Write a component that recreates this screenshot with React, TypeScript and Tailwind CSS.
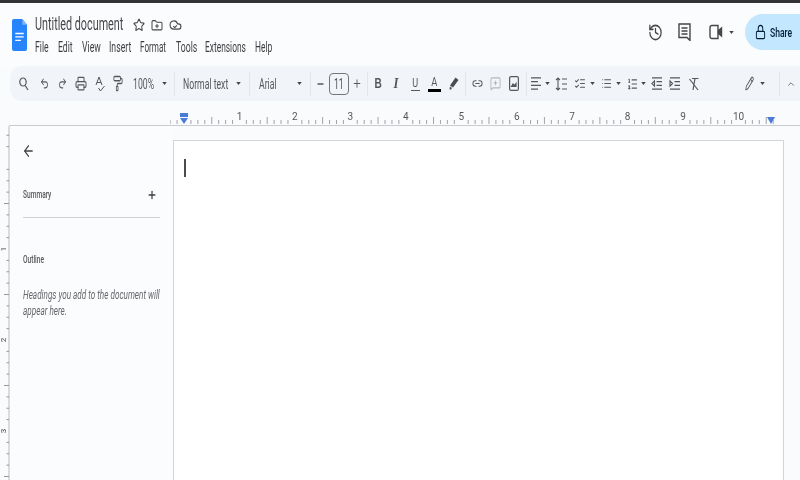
import React from "react";
import {
  Undo2, Redo2, Printer, PaintRoller, Star, FolderPlus, History, Lock, Link2, MessageSquarePlus,
  ListChecks, List, ListOrdered, Pencil, ChevronUp, ArrowLeft, Plus, Minus,
} from "lucide-react";

const np = { preserveAspectRatio: "none" as const };

function Cell({ className = "", children }: { className?: string; children?: React.ReactNode }) {
  return <div className={"flex items-center justify-center shrink-0 " + className}>{children}</div>;
}
function Caret({ className = "" }: { className?: string }) {
  return (
    <Cell className={"w-[8px] " + className}>
      <svg width="5" height="3" viewBox="0 0 6 4"><path d="M0 0h6L3 4z" fill="#444746" /></svg>
    </Cell>
  );
}
function Sep({ className = "" }: { className?: string }) {
  return <div className={"w-px h-[24px] bg-[#e2e6eb] shrink-0 " + className} />;
}
function Lines({ d }: { d: string }) {
  return (
    <svg className="w-[12px] h-[15px]" viewBox="0 0 24 24" preserveAspectRatio="none" fill="none" stroke="#55585a" strokeWidth="2.2">
      <path d={d} />
    </svg>
  );
}

function HRuler() {
  const x0 = 14;
  const step = 55.45 / 8;
  const ticks = [];
  for (let k = -2; k < 86; k++) {
    const x = x0 + k * step;
    const h = k % 8 === 0 ? 0 : k % 4 === 0 ? 7 : 4;
    if (h) ticks.push(<path key={k} d={`M${x} 23v-${h}`} stroke="#8a8d90" strokeWidth="0.8" />);
  }
  return (
    <svg width="630" height="24" viewBox="0 0 630 24" className="block shrink-0">
      {ticks}
      {[1, 2, 3, 4, 5, 6, 7, 8, 9, 10].map((n) => (
        <text key={n} x={x0 + n * 55.45} y="19" textAnchor="middle" fontSize="10" fontFamily="Roboto, sans-serif" fill="#55585a">{n}</text>
      ))}
      <rect x="10" y="12" width="8" height="4" fill="#4a7bd8" />
      <path d="M10 17h8l-4 6z" fill="#4a7bd8" />
      <path d="M597 16h8l-4 7z" fill="#4a7bd8" />
    </svg>
  );
}

function VRuler() {
  const y0 = 32;
  const step = 91 / 8;
  const ticks = [];
  for (let k = -2; k < 30; k++) {
    const y = y0 + k * step;
    const w = k % 8 === 0 ? 0 : k % 4 === 0 ? 5 : 2.5;
    if (w) ticks.push(<path key={k} d={`M9 ${y}h-${w}`} stroke="#8a8d90" strokeWidth="0.9" />);
  }
  return (
    <svg width="10" height="355" viewBox="0 0 10 355" className="block shrink-0">
      <path d="M9 0v355" stroke="#d0d2d5" strokeWidth="1.5" />
      {ticks}
      {[1, 2, 3].map((n) => (
        <text key={n} x="0" y="0" transform={`translate(1 ${y0 + n * 91}) rotate(-90) scale(1 0.9)`} textAnchor="middle" dominantBaseline="hanging" fontSize="8" fontFamily="Roboto, sans-serif" fill="#444746">{n}</text>
      ))}
    </svg>
  );
}

export default function App() {
  return (
    <div className="w-[800px] h-[480px] overflow-hidden flex flex-col bg-[#f9fbfd] text-[#1f1f1f] font-['Roboto',sans-serif] blur-[0.45px]">
      <div className="h-[3px] bg-[#333436] shrink-0" />

      {/* header */}
      <div className="h-[63px] shrink-0 flex bg-[#fbfcfe]">
        <div className="ml-[12px] mt-[16px] w-[15px] h-[32px] shrink-0">
          <svg width="15" height="32" viewBox="0 0 16 33" preserveAspectRatio="none" className="block">
            <path d="M2 0h9l5 6v25a2 2 0 0 1-2 2H2a2 2 0 0 1-2-2V2a2 2 0 0 1 2-2z" fill="#2684fc" />
            <path d="M11 0l5 6h-5z" fill="#7fb4fb" />
            <path d="M3.500 15h9M3.500 18.500h9M3.500 22h6" stroke="#fff" strokeWidth="1.4" />
          </svg>
        </div>
        <div className="ml-[8px] w-[240px] shrink-0 flex flex-col">
          <div className="mt-[11px] h-[22px] flex items-center">
            <span className="w-[95px] shrink-0 block">
              <span className="inline-block origin-left scale-x-[0.6] whitespace-nowrap text-[18px] leading-[22px] text-[#44474a]">Untitled document</span>
            </span>
            <Cell className="ml-[1px] w-[16px]"><Star className="w-[12px] h-[14px] text-[#444746]" {...np} /></Cell>
            <Cell className="ml-[2px] w-[16px]"><FolderPlus className="w-[12px] h-[13px] text-[#444746]" {...np} /></Cell>
            <Cell className="ml-[2px] w-[16px]">
              <svg className="w-[13px] h-[14px]" viewBox="0 0 24 24" preserveAspectRatio="none" fill="none" stroke="#444746" strokeWidth="2">
                <path d="M17.500 19H9a7 7 0 1 1 6.710-9h1.790a4.500 4.500 0 1 1 0 9Z" />
                <path d="m8 14 2.500 2.500 4-4" />
              </svg>
            </Cell>
          </div>
          <div className="mt-[3px] h-[16px] flex items-center text-[14px] leading-[16px] text-[#3c3f42]">
            <span className="block w-[23px] shrink-0"><span className="inline-block origin-left scale-x-[0.62] whitespace-nowrap">File</span></span>
            <span className="block w-[24px] shrink-0"><span className="inline-block origin-left scale-x-[0.62] whitespace-nowrap">Edit</span></span>
            <span className="block w-[27px] shrink-0"><span className="inline-block origin-left scale-x-[0.62] whitespace-nowrap">View</span></span>
            <span className="block w-[31px] shrink-0"><span className="inline-block origin-left scale-x-[0.62] whitespace-nowrap">Insert</span></span>
            <span className="block w-[36px] shrink-0"><span className="inline-block origin-left scale-x-[0.58] whitespace-nowrap">Format</span></span>
            <span className="block w-[29px] shrink-0"><span className="inline-block origin-left scale-x-[0.62] whitespace-nowrap">Tools</span></span>
            <span className="block w-[50px] shrink-0"><span className="inline-block origin-left scale-x-[0.6] whitespace-nowrap">Extensions</span></span>
            <span className="block w-[20px] shrink-0"><span className="inline-block origin-left scale-x-[0.6] whitespace-nowrap">Help</span></span>
          </div>
        </div>
        <div className="flex-1 flex items-start justify-end pt-[11px]">
          <Cell className="w-[18px] h-[36px]"><History className="w-[15px] h-[19px] text-[#444746]" {...np} /></Cell>
          <Cell className="ml-[11px] w-[18px] h-[36px]">
            <svg className="w-[13px] h-[18px]" viewBox="0 0 13 18" fill="none" stroke="#444746" strokeWidth="1.4">
              <path d="M1 1h11v13.500l0 3-3-3H1z" />
              <path d="M3.500 5h6M3.500 8h6M3.500 11h6" />
            </svg>
          </Cell>
          <Cell className="ml-[14px] w-[18px] h-[36px]">
            <svg className="w-[14px] h-[16px]" viewBox="0 0 14 16" fill="none" stroke="#444746" strokeWidth="1.4">
              <path d="M3 1.500h6v13H3a2 2 0 0 1-2-2v-9a2 2 0 0 1 2-2z" />
              <path d="M9.500 6.500 12.500 4v8l-3-2.500z" fill="#444746" />
            </svg>
          </Cell>
          <Caret className="ml-[2px] h-[36px]" />
          <div className="ml-[10px] w-[60px] -mr-[5px] h-[36px] rounded-l-[18px] bg-[#c2e7ff] flex items-center shrink-0">
            <Lock className="ml-[10px] w-[11px] h-[16px] text-[#001d35]" {...np} />
            <span className="ml-[4px] block w-[24px]">
              <span className="inline-block origin-left scale-x-[0.66] whitespace-nowrap text-[13px] font-medium text-[#001d35]">Share</span>
            </span>
          </div>
        </div>
      </div>

      {/* toolbar */}
      <div className="ml-[10px] h-[35px] shrink-0 rounded-l-[12px] bg-[#f1f5fa] flex items-center pl-[5px] text-[#55585a]">
        <Cell className="w-[18px]">
          <svg className="w-[10px] h-[14px]" viewBox="0 0 10 14" fill="none" stroke="#55585a" strokeWidth="1.2">
            <ellipse cx="4" cy="5" rx="3.200" ry="4" />
            <path d="M6.200 8.500 9 13" />
          </svg>
        </Cell>
        <Cell className="ml-[2px] w-[18px]"><Undo2 className="w-[9px] h-[13px]" {...np} /></Cell>
        <Cell className="w-[18px]"><Redo2 className="w-[9px] h-[13px]" {...np} /></Cell>
        <Cell className="ml-[1px] w-[18px]"><Printer className="w-[12px] h-[15px]" {...np} /></Cell>
        <Cell className="ml-[1px] w-[18px]">
          <svg className="w-[10px] h-[16px]" viewBox="0 0 10 16" fill="none" stroke="#55585a" strokeWidth="1">
            <path d="M1 9 4 1l3 8M2 6.500h4M3.500 12l2 3 4-5" />
          </svg>
        </Cell>
        <Cell className="w-[18px]"><PaintRoller className="w-[10px] h-[17px]" {...np} /></Cell>
        <span className="ml-[6px] block w-[21px] shrink-0"><span className="inline-block origin-left scale-x-[0.62] whitespace-nowrap text-[14px]">100%</span></span>
        <Caret className="ml-[6px]" />
        <Sep className="ml-[6px]" />
        <span className="ml-[8px] block w-[44px] shrink-0"><span className="inline-block origin-left scale-x-[0.62] whitespace-nowrap text-[14px]">Normal text</span></span>
        <Caret className="ml-[7px]" />
        <Sep className="ml-[7px]" />
        <span className="ml-[9px] block w-[17px] shrink-0"><span className="inline-block origin-left scale-x-[0.62] whitespace-nowrap text-[14px]">Arial</span></span>
        <Caret className="ml-[19px]" />
        <Sep className="ml-[7px]" />
        <Cell className="ml-[2px] w-[14px]"><Minus className="w-[9px] h-[12px]" strokeWidth={2.6} {...np} /></Cell>
        <div className="ml-[2px] w-[20px] h-[22px] rounded-[4px] border border-[#747775] flex items-center justify-center shrink-0">
          <span className="inline-block scale-x-[0.62] text-[14px] leading-none">11</span>
        </div>
        <Cell className="ml-[1px] w-[14px]"><Plus className="w-[10px] h-[13px]" {...np} /></Cell>
        <Sep className="ml-[3px]" />
        <Cell className="ml-[2px] w-[16px] font-['Liberation_Sans',sans-serif] font-bold text-[14px]"><span className="inline-block scale-x-[0.72]">B</span></Cell>
        <Cell className="ml-[2px] w-[16px] font-['Liberation_Serif',serif] italic font-bold text-[15px]"><span className="inline-block scale-x-[0.85]">I</span></Cell>
        <Cell className="ml-[3px] w-[16px]">
          <span className="flex flex-col items-center leading-none">
            <span className="inline-block scale-x-[0.7] text-[13px] leading-[12px]">U</span>
            <span className="mt-[1px] block w-[9px] h-px bg-[#55585a]" />
          </span>
        </Cell>
        <Cell className="ml-[3px] w-[16px]">
          <span className="flex flex-col items-center leading-none">
            <span className="inline-block scale-x-[0.72] text-[13px] leading-[12px]">A</span>
            <span className="mt-[1px] block w-[13px] h-[3px] bg-[#000]" />
          </span>
        </Cell>
        <Cell className="ml-[4px] w-[16px]">
          <svg className="w-[10px] h-[14px]" viewBox="0 0 10 14" fill="#4a4d4f">
            <path d="M6.500 0.500 9.500 3 4 10.500 1 8.500z" />
            <path d="M1 9.500 3 11l-1 1.500H0.500z" />
          </svg>
        </Cell>
        <Sep className="ml-[3px]" />
        <Cell className="ml-[3px] w-[16px]"><Link2 className="w-[11px] h-[13px]" {...np} /></Cell>
        <Cell className="ml-[2px] w-[16px]"><MessageSquarePlus className="w-[11px] h-[15px] text-[#b4b7b8]" {...np} /></Cell>
        <Cell className="ml-[3px] w-[16px]">
          <svg className="w-[10px] h-[15px]" viewBox="0 0 10 15" fill="none" stroke="#55585a" strokeWidth="1.2">
            <rect x="0.600" y="0.600" width="8.800" height="13.800" rx="1.500" />
            <path d="M2.500 10.500 4 8l1.500 1.500L7 7.500v3z" fill="#55585a" />
          </svg>
        </Cell>
        <Sep className="ml-[4px]" />
        <Cell className="ml-[2px] w-[14px]"><Lines d="M2 3h20M2 9h14M2 15h20M2 21h14" /></Cell>
        <Caret />
        <Cell className="ml-[3px] w-[14px]">
          <svg className="w-[12px] h-[14px]" viewBox="0 0 12 14" fill="none" stroke="#55585a" strokeWidth="1.100">
            <path d="M3 1v12M1 3l2-2 2 2M1 11l2 2 2-2M7 2h5M7 7h5M7 12h5" />
          </svg>
        </Cell>
        <Cell className="ml-[5px] w-[14px]"><ListChecks className="w-[12px] h-[13px]" {...np} /></Cell>
        <Caret className="ml-[1px]" />
        <Cell className="ml-[3px] w-[14px]"><List className="w-[11px] h-[13px]" {...np} /></Cell>
        <Caret className="ml-[1px]" />
        <Cell className="ml-[3px] w-[14px]"><ListOrdered className="w-[11px] h-[14px]" {...np} /></Cell>
        <Caret />
        <Cell className="ml-[3px] w-[14px]"><Lines d="M2 3h20M11 9h11M11 15h11M2 21h20M7 8l-5 4 5 4z" /></Cell>
        <Cell className="ml-[4px] w-[14px]"><Lines d="M2 3h20M11 9h11M11 15h11M2 21h20M2 8l5 4-5 4z" /></Cell>
        <Cell className="ml-[5px] w-[14px]">
          <svg className="w-[10px] h-[14px]" viewBox="0 0 10 14" fill="none" stroke="#55585a" strokeWidth="1.2">
            <path d="M3 1.500h6.500M6 1.500 4 13M0.500 2 9 13" />
          </svg>
        </Cell>
        <Cell className="ml-[41px] w-[14px]"><Pencil className="w-[9px] h-[15px]" {...np} /></Cell>
        <Caret className="ml-[2px]" />
        <Sep className="ml-[13px]" />
        <Cell className="ml-[4px] w-[14px]"><ChevronUp className="w-[10px] h-[10px]" {...np} /></Cell>
      </div>

      {/* horizontal ruler */}
      <div className="ml-[9px] h-[25px] shrink-0 border-b border-[#c9cbce] flex">
        <div className="w-[161px] shrink-0" />
        <HRuler />
      </div>

      {/* body */}
      <div className="flex-1 min-h-0 flex">
        <VRuler />
        <aside className="w-[163px] shrink-0 bg-[#fbfcfe] pl-[13px] pr-[13px]">
          <div className="h-[26px] mt-[16px] -ml-[1px]"><ArrowLeft className="w-[13px] h-[18px] text-[#3c4043]" {...np} /></div>
          <div className="mt-[19px] flex items-center justify-between h-[16px]">
            <span className="inline-block origin-left scale-x-[0.6] whitespace-nowrap text-[11px] font-medium text-[#55585a]">Summary</span>
            <Plus className="w-[10px] h-[12px] mr-[3px] text-[#3c4043]" strokeWidth={3} {...np} />
          </div>
          <div className="mt-[14px] h-px bg-[#cfd2d6]" />
          <div className="mt-[34px] h-[16px] flex items-center">
            <span className="inline-block origin-left scale-x-[0.6] whitespace-nowrap text-[11px] font-medium text-[#55585a]">Outline</span>
          </div>
          <p className="mt-[19px] italic text-[12px] leading-[16px] text-[#66696d] w-[200px] origin-left scale-x-[0.68]">
            <span className="block whitespace-nowrap">Headings you add to the document will</span>
            <span className="block whitespace-nowrap">appear here.</span>
          </p>
        </aside>
        <main className="w-[611px] shrink-0 mt-[14px] bg-white border-x border-t border-[#d3d5d8] pl-[10px] pt-[18px]">
          <div className="w-[1.5px] h-[18px] bg-[#4a4d50]" />
        </main>
      </div>
    </div>
  );
}
